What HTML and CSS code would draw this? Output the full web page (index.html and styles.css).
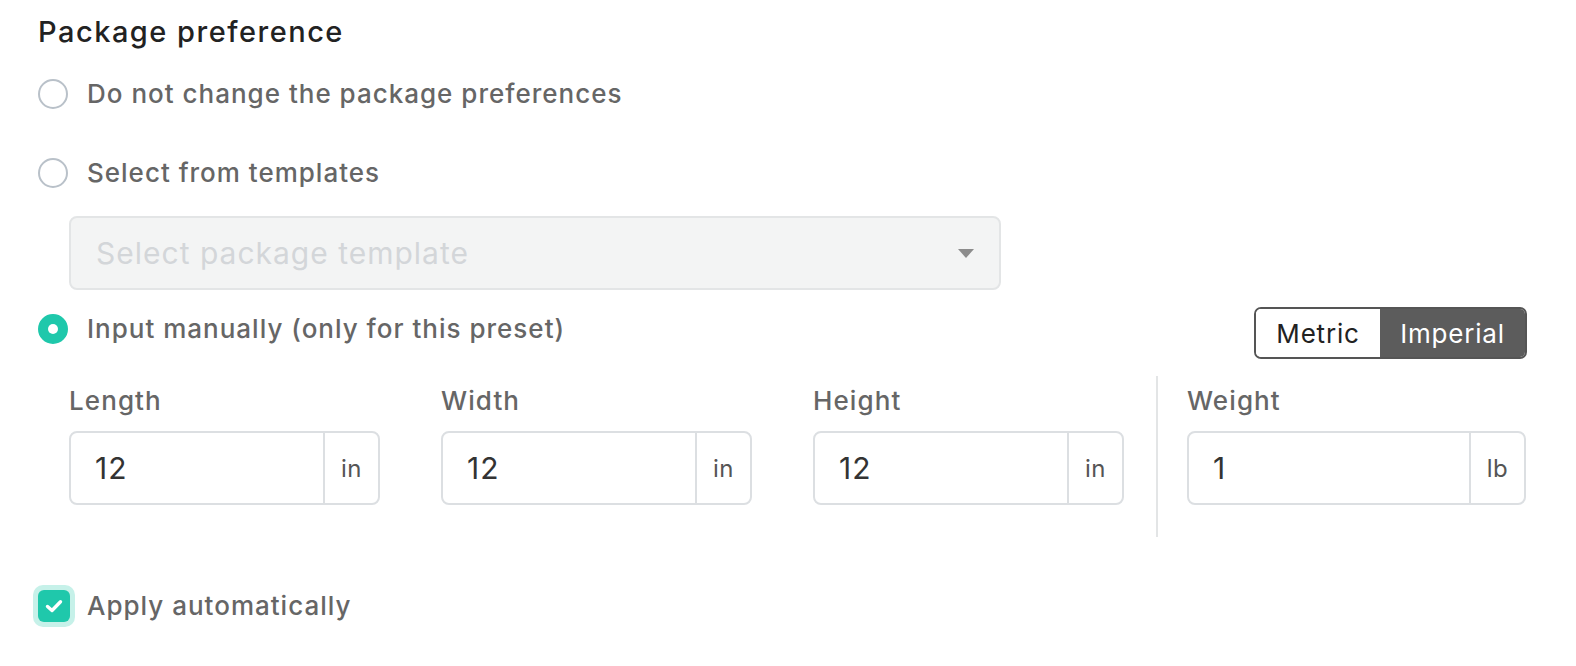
FILE: index.html
```html
<!DOCTYPE html>
<html>
<head>
<meta charset="utf-8">
<link rel="stylesheet" href="styles.css">
</head>
<body>
<div class="panel">
  <h2 class="title">Package preference</h2>

  <label class="radio-row r1">
    <span class="radio"></span>
    <span class="radio-label">Do not change the package preferences</span>
  </label>

  <label class="radio-row r2">
    <span class="radio"></span>
    <span class="radio-label">Select from templates</span>
  </label>

  <div class="select">
    <span class="placeholder">Select package template</span>
    <span class="caret"></span>
  </div>

  <div class="manual-row">
    <label class="radio-row r3">
      <span class="radio checked"></span>
      <span class="radio-label">Input manually (only for this preset)</span>
    </label>
    <div class="toggle">
      <span class="seg">Metric</span>
      <span class="seg active">Imperial</span>
    </div>
  </div>

  <div class="fields">
    <div class="field">
      <div class="field-label">Length</div>
      <div class="input"><span class="value">12</span><span class="unit">in</span></div>
    </div>
    <div class="field">
      <div class="field-label">Width</div>
      <div class="input"><span class="value">12</span><span class="unit">in</span></div>
    </div>
    <div class="field">
      <div class="field-label">Height</div>
      <div class="input"><span class="value">12</span><span class="unit">in</span></div>
    </div>
    <div class="divider"></div>
    <div class="field weight">
      <div class="field-label">Weight</div>
      <div class="input"><span class="value">1</span><span class="unit">lb</span></div>
    </div>
  </div>

  <label class="check-row">
    <span class="check-halo"><span class="check">
      <svg class="check-icon" viewBox="0 0 22 22"><path d="M4.5 11.5 L9 15.5 L17.5 6.8" fill="none" stroke="#fff" stroke-width="3.4" stroke-linecap="round" stroke-linejoin="round"/></svg>
    </span></span>
    <span class="radio-label">Apply automatically</span>
  </label>
</div>
</body>
</html>
```

FILE: styles.css
```css
* { box-sizing: border-box; }
html, body { margin: 0; padding: 0; background: #fff; }
body { font-family: Inter, "Noto Sans", sans-serif; }

.panel {
  width: 1576px;
  height: 666px;
  padding: 14px 49px 0 38px;
}

.title {
  margin: 0;
  font-size: 29px;
  letter-spacing: 1.5px;
  line-height: 36px;
  font-weight: 500;
  color: #222;
}

.radio-row {
  display: flex;
  align-items: center;
  height: 40px;
  gap: 19px;
}
.r1 { margin-top: 24px; }
.r2 { margin-top: 39px; }

.radio {
  width: 30px;
  height: 30px;
  border-radius: 50%;
  border: 2px solid #b9c1c9;
  background: #fff;
  flex: none;
  display: flex;
  align-items: center;
  justify-content: center;
}
.radio.checked {
  background: #1fc8ab;
  border-color: #1fc8ab;
}
.radio.checked::after {
  content: "";
  width: 10px;
  height: 10px;
  border-radius: 50%;
  background: #fff;
}

.radio-label {
  font-size: 26px;
  letter-spacing: 1px;
  font-weight: 500;
  color: #666;
  line-height: 40px;
}

.select {
  margin: 23px 0 0 31px;
  width: 932px;
  height: 74px;
  border: 2px solid #e3e5e6;
  border-radius: 8px;
  background: #f3f4f4;
  display: flex;
  align-items: center;
  justify-content: space-between;
  padding: 0 25px 0 25px;
}
.placeholder {
  font-size: 30px;
  letter-spacing: 1px;
  color: #d3d6d9;
}
.caret {
  width: 0;
  height: 0;
  border-left: 8px solid transparent;
  border-right: 8px solid transparent;
  border-top: 9px solid #8c8c8c;
}

.manual-row {
  display: flex;
  justify-content: space-between;
  align-items: flex-start;
  margin-top: 17px;
}
.manual-row .r3 { margin-top: 2px; }

.toggle {
  display: flex;
  height: 52px;
  border: 2px solid #555;
  border-radius: 7px;
  overflow: hidden;
}
.seg {
  display: flex;
  align-items: center;
  justify-content: center;
  font-size: 26px;
  letter-spacing: 0.8px;
  color: #222;
  background: #fff;
  width: 124px;
}
.seg.active {
  background: #5c5c5c;
  color: #fff;
  width: 145px;
}

.fields {
  display: flex;
  margin: 17px 0 0 31px;
  height: 161px;
}
.field {
  width: 311px;
  margin-right: 61px;
  padding-top: 10px;
}
.field:nth-child(3) { margin-right: 32px; }
.field.weight { width: 339px; margin-right: 0; }
.divider {
  width: 2px;
  background: #e3e5e6;
  margin-right: 29px;
}
.field-label {
  font-size: 26px;
  letter-spacing: 1.1px;
  font-weight: 500;
  color: #666;
  line-height: 30px;
  margin-bottom: 15px;
}
.input {
  height: 74px;
  border: 2px solid #dcdfe2;
  border-radius: 8px;
  display: flex;
  align-items: stretch;
}
.value {
  flex: 1;
  display: flex;
  align-items: center;
  padding-left: 24px;
  font-size: 30px;
  letter-spacing: 1px;
  color: #333;
}
.unit {
  width: 55px;
  border-left: 2px solid #dcdfe2;
  display: flex;
  align-items: center;
  justify-content: center;
  font-size: 24px;
  letter-spacing: 0.5px;
  color: #555;
}

.check-row {
  display: flex;
  align-items: center;
  height: 40px;
  margin: 49px 0 0 -5px;
  gap: 12px;
}
.check-halo {
  width: 42px;
  height: 42px;
  border-radius: 10px;
  background: #c6f1e9;
  display: flex;
  align-items: center;
  justify-content: center;
}
.check {
  width: 32px;
  height: 32px;
  border-radius: 6px;
  background: #1fc8ab;
  display: flex;
  align-items: center;
  justify-content: center;
}
.check-icon {
  width: 22px;
  height: 22px;
  display: block;
}
```
